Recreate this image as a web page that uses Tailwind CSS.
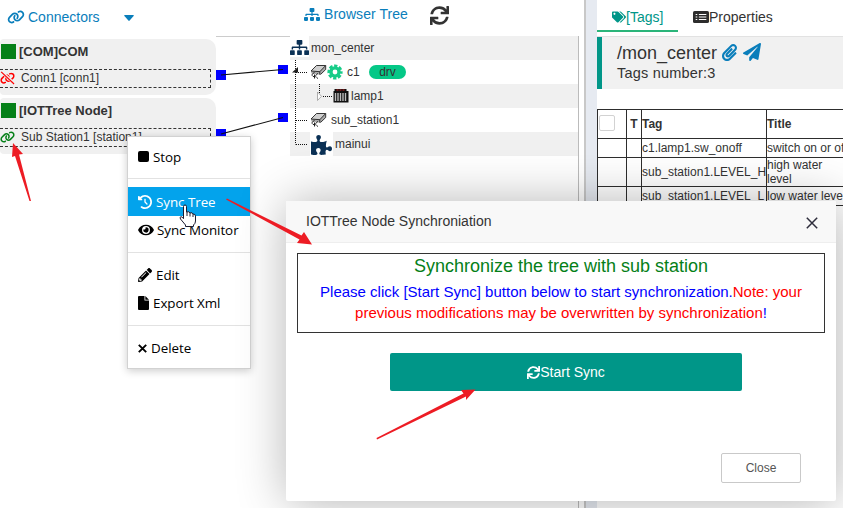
<!DOCTYPE html>
<html lang="en">
<head>
<meta charset="utf-8">
<title>IOTTree</title>
<script src="https://cdn.jsdelivr.net/npm/@tailwindcss/browser@4"></script>
</head>
<body class="relative w-[843px] h-[508px] overflow-hidden bg-white text-[#333] font-['Liberation_Sans',Arial,sans-serif]">
<svg class="hidden">
  <symbol id="link" viewBox="0 0 640 512"><path d="M579.8 267.7c56.5-56.5 56.5-148 0-204.5c-50-50-128.8-56.5-186.3-15.4l-1.6 1.1c-14.4 10.3-17.7 30.3-7.4 44.6s30.3 17.7 44.6 7.4l1.6-1.1c32.1-22.9 76-19.3 103.8 8.6c31.5 31.5 31.5 82.5 0 114L422.3 334.8c-31.5 31.5-82.5 31.5-114 0c-27.9-27.9-31.5-71.8-8.6-103.8l1.1-1.6c10.3-14.4 6.9-34.4-7.4-44.6s-34.4-6.9-44.6 7.4l-1.1 1.6C206.5 251.2 213 330 263 380c56.5 56.5 148 56.5 204.5 0L579.8 267.7zM60.2 244.3c-56.5 56.5-56.5 148 0 204.5c50 50 128.8 56.5 186.3 15.4l1.6-1.1c14.4-10.3 17.7-30.3 7.4-44.6s-30.3-17.7-44.6-7.4l-1.6 1.1c-32.1 22.9-76 19.3-103.8-8.6C74 372 74 321 105.5 289.5L217.7 177.2c31.5-31.5 82.5-31.5 114 0c27.9 27.9 31.5 71.8 8.6 103.9l-1.1 1.6c-10.3 14.4-6.9 34.4 7.4 44.6s34.4 6.9 44.6-7.4l1.1-1.6C433.5 260.8 427 182 377 132c-56.5-56.5-148-56.5-204.5 0L60.2 244.3z"/></symbol>
  <symbol id="sitemap" viewBox="0 0 640 512"><path d="M128 352H32c-17.67 0-32 14.33-32 32v96c0 17.67 14.33 32 32 32h96c17.67 0 32-14.33 32-32v-96c0-17.67-14.33-32-32-32zm-24-80h192v48h48v-48h192v48h48v-57.59c0-21.17-17.23-38.41-38.41-38.41H344v-64h40c17.67 0 32-14.33 32-32V32c0-17.67-14.33-32-32-32H256c-17.67 0-32 14.33-32 32v96c0 17.67 14.33 32 32 32h40v64H94.41C73.23 224 56 241.23 56 262.41V320h48v-48zm264 80h-96c-17.67 0-32 14.33-32 32v96c0 17.67 14.33 32 32 32h96c17.67 0 32-14.33 32-32v-96c0-17.67-14.33-32-32-32zm240 0h-96c-17.67 0-32 14.33-32 32v96c0 17.67 14.33 32 32 32h96c17.67 0 32-14.33 32-32v-96c0-17.67-14.33-32-32-32z"/></symbol>
  <symbol id="sync" viewBox="0 0 512 512"><path d="M440.65 12.57l4 82.77A247.16 247.16 0 0 0 255.83 8C134.73 8 33.91 94.92 12.29 209.82A12 12 0 0 0 24.09 224h49.05a12 12 0 0 0 11.67-9.26 175.91 175.91 0 0 1 317-56.94l-101.46-4.86a12 12 0 0 0-12.57 12v47.41a12 12 0 0 0 12 12H500a12 12 0 0 0 12-12V12a12 12 0 0 0-12-12h-47.37a12 12 0 0 0-11.98 12.57zM255.83 432a175.61 175.61 0 0 1-146-77.8l101.8 4.87a12 12 0 0 0 12.57-12v-47.4a12 12 0 0 0-12-12H12a12 12 0 0 0-12 12V500a12 12 0 0 0 12 12h47.35a12 12 0 0 0 12-12.6l-4.15-82.57A247.17 247.17 0 0 0 255.83 504c121.11 0 221.93-86.92 243.55-201.82a12 12 0 0 0-11.8-14.18h-49.05a12 12 0 0 0-11.67 9.26A175.86 175.86 0 0 1 255.83 432z"/></symbol>
  <symbol id="device" viewBox="0 0 17 16"><path d="M1 7.500 6.500 1.500H15.500V5.500L10.500 10.500H8L1.500 9.500z" fill="#aaa"/><path d="M1 7 6.500 1.500H15.500L9.800 7.500z" fill="#d0d0d0"/><path d="M1 7 6.500 1.500H15.700V5.500L10.500 10.500M1 7l8.800.700L15.500 1.700M9.800 7.700v3" fill="none" stroke="#222" stroke-width=".9"/><path d="M4.500 8.500c-2.500 1-3 3-2 3.500M3 12.500h1.500M8 9.500c-2.500 1-3 3-1.500 4.200M4.500 10.500v4M7 13.800l1 .7" fill="none" stroke="#222"/></symbol>
</svg>

<div class="flex h-full">
  <!-- connectors -->
  <section class="w-[216px] shrink-0">
    <header class="flex h-[39px] pt-[7px] pl-[7px] items-start text-[#0a7ebb]">
      <svg class="w-[18px] h-[14px] mt-[3px]" fill="#0a7ebb"><use href="#link"/></svg>
      <span class="ml-[3px] text-[14px] leading-[20px] w-[72px] whitespace-nowrap">Connectors</span>
      <svg class="w-[10px] h-[6px] mt-[8px] ml-[24px]" viewBox="0 0 10 6" fill="#0a7ebb"><path d="M.8 0h8.400q1 .2.4 1L5.600 5.600q-.6.6-1.200 0L.4 1Q-.2.200.8 0z"/></svg>
    </header>
    <article class="h-[56px] bg-[#f0f0f0] rounded-r-[10px] rounded-l-[4px] pt-[5px]">
      <div class="flex h-[25px] pl-px"><i class="size-[15px] bg-[#058018]"></i><b class="ml-[3px] text-[13px] leading-[15px]">[COM]COM</b></div>
      <div class="flex h-[19px] w-[211px] border border-l-0 border-dashed border-[#333] items-center">
        <svg class="w-[15px] h-[14px] -mt-px" viewBox="0 0 640 560" fill="#f00"><g transform="translate(0 30)"><use href="#link" width="640" height="512"/></g><path d="M60 10 610 520" stroke="#f0f0f0" stroke-width="130"/><path d="M50 20 600 535" stroke="#f00" stroke-width="50"/></svg>
        <span class="ml-[6px] -mt-[2px] text-[12px] leading-[16px]">Conn1 [conn1]</span>
      </div>
    </article>
    <article class="mt-[3px] h-[56px] bg-[#f0f0f0] rounded-r-[10px] rounded-l-[4px] pt-[5px]">
      <div class="flex h-[25px] pl-px"><i class="size-[15px] bg-[#058018]"></i><b class="ml-[3px] text-[13px] leading-[15px]">[IOTTree Node]</b></div>
      <div class="flex h-[19px] w-[211px] border border-l-0 border-dashed border-[#333] items-center">
        <svg class="w-[15px] h-[12px] -mt-[2px]" fill="#058018"><use href="#link"/></svg>
        <span class="ml-[6px] -mt-[2px] text-[12px] leading-[16px]">Sub Station1 [station1]</span>
      </div>
    </article>
  </section>

  <!-- wires between connectors and tree -->
  <section class="w-[74px] shrink-0 pt-[36px]">
    <svg class="w-[74px] h-[120px]" viewBox="0 36 74 120"><path d="M0 36.500h74" stroke="#ccc"/><path fill="#00f" d="M0 70h10v10H0zM62 65h10v9H62zM0 129h10v10H0zM62 113h10v9H62z"/><path stroke="#111" stroke-width="1.100" d="M5 75 67 69.500M5 134 67 117.500"/></svg>
  </section>

  <!-- browser tree -->
  <section class="w-[289px] shrink-0">
    <header class="flex h-[36px] pl-[14px] pt-[5px] items-start text-[#0a7ebb]">
      <svg class="w-[16px] h-[13px] mt-[3px]" fill="#0a7ebb"><use href="#sitemap"/></svg>
      <span class="ml-[4px] w-[84px] text-[14px] leading-[19px] tracking-[.05px] whitespace-nowrap">Browser Tree</span>
      <svg class="w-[19px] h-[19px] mt-[1px] ml-[22px]" fill="#333"><use href="#sync"/></svg>
    </header>
    <div class="h-[472px] border-r border-[#bbb] text-[12px] leading-[24px] relative">
      <div class="flex h-[24px] bg-[#f0f0f0]"><span class="bg-white w-[19px] h-[21px]"><svg class="w-[19px] h-[17px] mt-[3px]" preserveAspectRatio="none" fill="#0b3155"><use href="#sitemap"/></svg></span><span class="ml-[2px]">mon_center</span></div>
      <div class="flex h-[24px] items-center"><svg class="w-[17px] h-[16px] ml-[20px]"><use href="#device"/></svg>
        <svg class="w-[16px] h-[16px] ml-0" viewBox="-8 -8 16 16"><circle r="4.100" fill="none" stroke="#17cc88" stroke-width="3.400"/><circle r="6.300" fill="none" stroke="#17cc88" stroke-width="2.600" stroke-dasharray="3.300 1.648" stroke-dashoffset="1.650"/></svg>
        <span class="ml-[4px] w-[12px]">c1</span><span class="ml-[10px] w-[37px] h-[14px] leading-[14px] rounded-full bg-[#05c887] text-center">drv</span></div>
      <div class="flex h-[24px] bg-[#f0f0f0] items-center"><svg class="w-[16px] h-[14px] ml-[43px]" viewBox="0 0 16 14"><path d="M1.500 0h12v2H15.500v11.500H.5V2h1z" fill="#111"/><path d="M3.500 1h9" stroke="#c22" stroke-dasharray="2 1"/><path d="M2.500 4v8M5 4v8M7.500 4v8M10 4v8M12.500 4v8" stroke="#bbb" stroke-width="1.400"/></svg><span class="ml-[2px]">lamp1</span></div>
      <div class="flex h-[24px] items-center"><svg class="w-[17px] h-[16px] ml-[20px]"><use href="#device"/></svg><span class="ml-[4px]">sub_station1</span></div>
      <div class="flex h-[24px] bg-[#f0f0f0]"><span class="ml-[20px] w-[23px] bg-white h-[24px] pl-[1px] pt-[3px]"><svg class="w-[21px] h-[20px]" viewBox="0 0 576 512" fill="#0b3155" preserveAspectRatio="none"><path d="M519.442 288.651c-41.519 0-59.500 31.593-82.058 31.593C377.409 320.244 432 144 432 144s-196.288 80-196.288-3.297c0-35.827 36.288-46.250 36.288-85.985C272 19.216 243.885 0 210.539 0c-34.654 0-66.366 18.891-66.366 56.346 0 41.364 31.711 59.277 31.711 81.750C175.885 207.719 0 166.758 0 166.758v333.237s178.635 41.047 178.635-28.662c0-22.473-40-40.107-40-81.471 0-37.456 29.250-56.346 63.577-56.346 33.673 0 61.788 19.216 61.788 54.717 0 39.735-36.288 50.158-36.288 85.985 0 60.803 129.675 25.730 181.230 25.730 0 0-34.725-120.101 25.827-120.101 35.962 0 46.423 36.152 86.308 36.152C556.712 416 576 387.990 576 354.443c0-34.199-18.962-65.792-56.558-65.792z"/></svg></span><span class="ml-[2px]">mainui</span></div>
      <!-- branch guides -->
      <svg class="absolute left-0 top-0 w-[60px] h-[120px]" viewBox="0 0 60 120" fill="none"><path d="M5.500 24v84.500M6 36.500h12M6 84.500h12M6 108.500h12M29.500 48v10M33 60.500h10" stroke="#111" stroke-dasharray="1 1"/><path d="M2 36.500 8 31v5.500z" fill="#222"/><path d="M27.500 56v8.500l4-4.200z" stroke="#999" fill="#fff" stroke-width=".8"/></svg>
    </div>
  </section>

  <div class="w-[18px] shrink-0 bg-[#e6eaf1] border-l-[5px] border-white"><div class="h-full w-[2px] bg-[#c8c8c8]"></div></div>

  <!-- tags panel -->
  <section class="w-[246px] shrink-0 overflow-hidden">
    <nav class="flex h-[37px] border-b border-[#e2e2e2] text-[14px] leading-[34px]">
      <div class="flex w-[81px] h-[32px] pl-[15px] border-b-2 border-[#2bb57a] text-[#009688] items-center"><svg class="w-[14px] h-[12px] mt-[3px]" viewBox="0 0 640 512" fill="#009688"><path d="M497.941 225.941L286.059 14.059A48 48 0 0 0 252.118 0H48C21.490 0 0 21.490 0 48v204.118a48 48 0 0 0 14.059 33.941l211.882 211.882c18.744 18.745 49.136 18.746 67.882 0l204.118-204.118c18.745-18.745 18.745-49.137 0-67.882zM112 160c-26.510 0-48-21.490-48-48s21.490-48 48-48 48 21.490 48 48-21.490 48-48 48zm513.941 133.823L421.823 497.941c-18.745 18.745-49.137 18.745-67.882 0l-.36-.36L527.640 323.522c16.999-16.999 26.360-39.600 26.360-63.640s-9.362-46.641-26.360-63.640L331.397 0h48.721a48 48 0 0 1 33.941 14.059l211.882 211.882c18.745 18.745 18.745 49.137 0 67.882z"/></svg><span class="mt-[4px]">[Tags]</span></div>
      <svg class="w-[16px] h-[12px] mt-[11px] ml-[15px]" viewBox="0 0 15 12" preserveAspectRatio="none"><rect width="15" height="12" rx="1.500" fill="#2d2d2d"/><path d="M2.500 3.500h1.500M2.500 6h1.500M2.500 8.500h1.500M5.500 3.500h7M5.500 6h7M5.500 8.500h7" stroke="#fff" stroke-width="1.200"/></svg><span>Properties</span>
    </nav>
    <div class="h-[52px] bg-[#f1f1f1] border-l-[5px] border-[#009688] pl-[15px] pt-[5px]">
      <div class="flex h-[21px] text-[18px] leading-[22px]"><span class="w-[100px]">/mon_center</span>
        <svg class="w-[15px] h-[17px] mt-[2px] ml-[5px]" viewBox="0 0 448 512" fill="#0a7ebb" preserveAspectRatio="none"><path d="M43.246 466.142c-58.430-60.289-57.341-157.511 1.386-217.581L254.392 34c44.316-45.332 116.351-45.336 160.671 0 43.890 44.894 43.943 117.329 0 162.276L232.214 383.128c-29.855 30.537-78.633 30.111-107.982-.998-28.275-29.970-27.368-77.473 1.452-106.953l143.743-146.835c6.182-6.314 16.312-6.422 22.626-.241l22.861 22.379c6.315 6.182 6.422 16.312.241 22.626L171.427 319.927c-4.932 5.045-5.236 13.428-.648 18.292 4.372 4.634 11.245 4.711 15.688.165l182.849-186.851c19.613-20.062 19.613-52.725-.011-72.798-19.189-19.627-49.957-19.637-69.154 0L90.390 293.295c-34.763 35.560-35.299 93.120-1.191 128.313 34.010 35.093 88.985 35.137 123.058.286l172.060-175.999c6.177-6.319 16.307-6.433 22.626-.256l22.877 22.364c6.319 6.177 6.434 16.307.256 22.626l-172.060 175.998c-59.576 60.938-155.943 60.216-214.770-.485z"/></svg>
        <svg class="w-[18px] h-[18px] mt-[1px] ml-[6px]" viewBox="0 0 512 512" fill="#0a7ebb"><path d="M476 3.200L12.500 270.600c-18.100 10.400-15.800 35.600 2.200 43.200L121 358.400l287.300-253.200c5.500-4.900 13.300 2.600 8.600 8.300L176 407v80.500c0 23.600 28.500 32.900 42.500 15.800L282 426l124.600 52.200c14.200 6 30.400-2.900 33-18.200l72-432C515 7.800 493.300-6.800 476 3.200z"/></svg>
      </div>
      <div class="text-[14.5px] leading-[20px] tracking-[.2px]">Tags number:3</div>
    </div>
    <div class="mt-[20px] w-[270px] grid grid-cols-[29px_15px_125px_101px] grid-rows-[29px_19px_29px_19px] border-b border-[#2d2d2d] text-[12px] leading-[14px] *:border-l *:border-t *:border-[#2d2d2d] *:flex *:items-center *:whitespace-nowrap">
      <div><i class="size-[16px] ml-px -mt-[2px] border border-[#d2d2d2] rounded-[2px] bg-white"></i></div><div class="justify-center font-bold">T</div><div class="font-bold">Tag</div><div class="font-bold">Title</div>
      <div></div><div></div><div>c1.lamp1.sw_onoff</div><div>switch on or off</div>
      <div></div><div></div><div>sub_station1.LEVEL_H</div><div>high water<br>level</div>
      <div></div><div></div><div>sub_station1.LEVEL_L</div><div>low water level</div>
    </div>
  </section>
</div>

<!-- context menu -->
<div class="absolute left-[127px] top-[136px] w-[124px] h-[233px] bg-white border border-[#d2d2d2] shadow-[0_2px_8px_rgba(0,0,0,0.2)] text-black text-[13.4px] tracking-[-.05px] leading-[28px] font-['Open_Sans','Noto_Sans',sans-serif] pt-[5px]">
  <div class="flex h-[29px] items-center pl-[10px] gap-[4px]"><i class="size-[11px] rounded-[2px] bg-black"></i>Stop</div>
  <hr class="mt-[7px] mb-[8px] border-[#e2e2e2]">
  <div class="flex h-[29px] items-center pl-[10px] gap-[4px] bg-[#03a3ec] text-white"><svg class="size-[14px]" viewBox="0 0 512 512" fill="#fff"><path d="M75 75L41 41C25.900 25.900 0 36.600 0 57.900V168c0 13.300 10.700 24 24 24H134.100c21.400 0 32.100-25.900 17-41l-30.800-30.800C155 85.500 203 64 256 64c106 0 192 86 192 192s-86 192-192 192c-40.800 0-78.600-12.700-109.700-34.400c-14.500-10.100-34.400-6.600-44.600 7.900s-6.600 34.400 7.900 44.600C151.200 495 201.700 512 256 512c141.400 0 256-114.600 256-256S397.400 0 256 0C185.300 0 121.300 28.700 75 75zm181 53c-13.300 0-24 10.700-24 24V256c0 6.400 2.500 12.500 7 17l72 72c9.400 9.400 24.600 9.400 33.900 0s9.400-24.600 0-33.900l-65-65V152c0-13.300-10.700-24-24-24z"/></svg>Sync Tree</div>
  <div class="flex h-[28px] items-center pl-[10px] gap-[3px] whitespace-nowrap"><svg class="w-[16px] h-[14px]" viewBox="0 0 576 512"><path d="M572.520 241.400C518.290 135.590 410.930 64 288 64S57.680 135.640 3.480 241.410a32.350 32.350 0 0 0 0 29.190C57.710 376.410 165.070 448 288 448s230.320-71.640 284.520-177.410a32.350 32.350 0 0 0 0-29.190zM288 400a144 144 0 1 1 144-144 143.930 143.930 0 0 1-144 144zm0-240a95.310 95.310 0 0 0-25.310 3.790 47.850 47.850 0 0 1-66.900 66.900A95.780 95.780 0 1 0 288 160z"/></svg>Sync Monitor</div>
  <hr class="mt-[8px] mb-[8px] border-[#e2e2e2]">
  <div class="flex h-[28px] items-center pl-[10px] gap-[4px]"><svg class="size-[14px]" viewBox="0 0 512 512"><path d="M497.900 142.100l-46.100 46.100c-4.700 4.700-12.300 4.700-17 0l-111-111c-4.700-4.700-4.700-12.300 0-17l46.100-46.100c18.700-18.700 49.100-18.700 67.900 0l60.100 60.100c18.800 18.700 18.800 49.100 0 67.900zM284.200 99.800L21.600 362.400.4 483.900c-2.900 16.400 11.400 30.600 27.800 27.800l121.500-21.300 262.600-262.600c4.700-4.700 4.700-12.300 0-17l-111-111c-4.800-4.700-12.400-4.700-17.100 0zM124.100 339.900c-5.500-5.500-5.500-14.300 0-19.800l154-154c5.500-5.500 14.300-5.500 19.800 0s5.500 14.300 0 19.800l-154 154c-5.500 5.500-14.300 5.500-19.800 0zM88 424h48v36.300l-64.500 11.300-31.100-31.100L51.700 376H88v48z"/></svg>Edit</div>
  <div class="flex h-[28px] items-center pl-[10px] gap-[4px]"><svg class="w-[11px] h-[14px]" viewBox="0 0 11 14"><path d="M1 0h5.500v4.500H11V13q0 1-1 1H1q-1 0-1-1V1q0-1 1-1z"/><path d="M7.300 0 11 3.700H7.300z"/></svg>Export Xml</div>
  <hr class="mt-[8px] mb-[8px] border-[#e2e2e2]">
  <div class="flex h-[28px] items-center pl-[10px] gap-[4px]"><svg class="w-[9px] h-[9px]" viewBox="0 0 9 9"><path d="M.8.8l7.400 7.400M8.200.8.800 8.200" stroke="#000" stroke-width="1.900"/></svg>Delete</div>
</div>

<!-- dialog -->
<div class="absolute left-[286px] top-[201px] w-[550px] h-[300px] bg-white rounded-[2px] shadow-[1px_1px_50px_rgba(0,0,0,0.3)] flex flex-col">
  <header class="h-[42px] shrink-0 flex items-center justify-between bg-[#f8f8f8] border-b border-[#eee] pl-[20px] pr-[18px] text-[14px]"><span class="w-[186px] whitespace-nowrap">IOTTree Node Synchroniation</span><svg class="size-[12px] mt-[3px]" viewBox="0 0 12 12"><path d="M.8.8l10.400 10.400M11.200.8.800 11.200" stroke="#2e2d3c" stroke-width="1.500"/></svg></header>
  <div class="mt-[10px] ml-[11px] w-[528px] h-[80px] shrink-0 border border-[#333] text-center text-[15px] leading-[21px] text-[#00f]">
    <div class="text-[18px] leading-[24px] mb-[3px] text-[#058018]">Synchronize the tree with sub station</div>
    Please click [Start Sync] button below to start synchronization.<span class="text-[#f00]">Note: your<br>previous modifications may be overwritten by synchronization</span>!
  </div>
  <button class="mt-[20px] ml-[104px] w-[352px] h-[38px] shrink-0 rounded-[2px] bg-[#009688] text-white text-[14px] flex items-center justify-center"><svg class="size-[13px]" fill="#fff"><use href="#sync"/></svg>Start Sync</button>
  <button class="mt-[62px] ml-[435px] w-[80px] h-[30px] shrink-0 border border-[#c9c9c9] rounded-[2px] text-[12px] text-[#555]">Close</button>
</div>

<!-- annotation arrows and pointer -->
<svg class="absolute inset-0 w-[843px] h-[508px] pointer-events-none" viewBox="0 0 843 508">
  <g fill="#ed1c24"><path d="M13 143 23 154 19 154.500 31 201 29.500 201 15 156 12 157z"/><path d="M312 244.500 297 243 299.500 239.500 226 199.500 227 198.500 301.500 235.500 304 232z"/><path d="M475.500 389.500 466 400 466 396.500 377 439.500 376.500 438 463.500 393.500 461 390z"/></g>
  <path d="M183.500 206.500q0-1.500 1.500-1.500t1.500 1.500v5.500q3-1 3.500 1 2.500-1 3 1 2.500 0 2.500 2v5q0 2.500-2 4v1.500h-8V225l-5-6q-1.200-2 .5-2.300 1.200 0 2.500 2z" fill="#fff" stroke="#1c1c30"/><path d="M187 212v4M190 213v3.500M193 214v3" stroke="#1c1c30"/>
</svg>
</body>
</html>
